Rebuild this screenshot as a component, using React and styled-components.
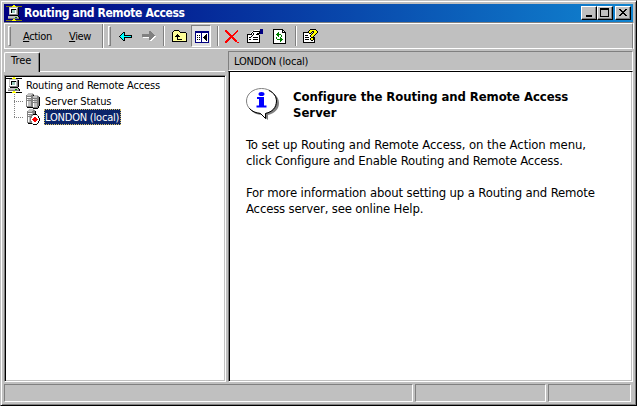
import React from 'react';
import styled, { createGlobalStyle } from 'styled-components';

const Global = createGlobalStyle`
  * { box-sizing: border-box; }
  html, body { margin: 0; padding: 0; overflow: hidden; background: #c0c0c0; }
  body { font-family: "DejaVu Sans Condensed", "DejaVu Sans", sans-serif; font-stretch: condensed; font-size: 11px; color: #000; }
`;

const PALETTE = {
  K: '#000000', W: '#ffffff', G: '#808080', L: '#c0c0c0', Y: '#ffff00', P: '#ffff99',
  C: '#00ffff', T: '#008080', N: '#000080', R: '#ff0000', E: '#008000',
  O: '#808000', D: '#555555', S: '#99ccbb',
};

const Svg = styled.svg`
  display: block;
  flex: none;
  shape-rendering: crispEdges;
`;

function PixelIcon({ rows }) {
  const width = Math.max(...rows.map((r) => r.length));
  const runs = [];
  rows.forEach((row, y) => {
    let x = 0;
    while (x < row.length) {
      const c = row[x];
      let end = x + 1;
      while (end < row.length && row[end] === c) end += 1;
      if (PALETTE[c]) runs.push(<rect key={`${x}-${y}`} x={x} y={y} width={end - x} height={1} fill={PALETTE[c]} />);
      x = end;
    }
  });
  return (
    <Svg width={width} height={rows.length} viewBox={`0 0 ${width} ${rows.length}`} aria-hidden="true">
      {runs}
    </Svg>
  );
}

const computer = (line) => [
  '.......YY.......',
  `${line.repeat(6)}YYYY${line.repeat(6)}`,
  '...LLLLLLLLL....',
  '...LWWWWWWWGK...',
  '...LWKKKKKLGK...',
  '...LWKSSSWLGK...',
  '...LWKSSSWLGK...',
  '...LWKSSSWLGK...',
  '...LWWWWWWLGK...',
  '...GGGGGGGGGK...',
  '....KKKKKKKK....',
  '..LLLLLLLLLLK...',
  '..LLLLLLLEELGK..',
  '..GGGGGGGGGGGK..',
  '.......YY.......',
  `${line.repeat(6)}YYYY${line.repeat(6)}`,
];

const servers = [
  '....LLLLL.......',
  '...LLLLLGG......',
  '..GLLLLGGKLLLL..',
  '..GGGGGGGLLLLGG.',
  '..GWWWWGGLLLLGGK',
  '..GGGGGGGGGGGGGK',
  '..GWLLLGGWLLLGGK',
  '..GGGGGGGGGGGGGK',
  '..GWLLLGGWLLLGGK',
  '..GWLLLGGGGGGGGK',
  '..GWLLLGGWLLLGGK',
  '..GWLLLGGWLLLGGK',
  '..GWLLLGGWLLLGGK',
  '..GGGGGGGWLLLGK.',
  '...KKKKKKGGGGGK.',
  '.........KKKKK..',
];

const stoppedServer = [
  '.....LLLLL......',
  '....LLLLLGG.....',
  '...GLLLLGGGK....',
  '...GGGGGGGGK....',
  '...GWWWWLGGK....',
  '...GGGGGGKKKK...',
  '...GWLLGGWWWWG..',
  '...GGGGGWWWWWWK.',
  '...GWLGGWWRRWWK.',
  '...GWLGWWRRRRWWK',
  '...GWLGWRRRRRRWK',
  '...GWLGWWRRRRWWK',
  '...GWLGGWWRRWWK.',
  '...GGGGGWWWWWWK.',
  '....KKKKGWWWWK..',
  '.........KKKK...',
];

const back = [
  '....KK.......',
  '...KCK.......',
  '..KCCK.......',
  '.KCCCKKKKKKKK',
  'KCCCCCCCCCCCK',
  '.KCCCKKKKKKKK',
  '..KCCK.......',
  '...KCK.......',
  '....KK.......',
];

const forward = [
  '.......GG.....',
  '.......GGG....',
  '.......GGGG...',
  'GGGGGGGGGGGG..',
  'GGGGGGGGGGGGG.',
  'GGGGGGGGGGGGWW',
  '.WWWWWWGGGGWW.',
  '.......GGGWW..',
  '.......GGWW...',
  '........WW....',
];

const folderUp = [
  '..KKKKK........',
  '.KPPPPPK.......',
  'KPPPPPPPKKKKKK.',
  'KPPPPPPPPPPPPPK',
  'KPPPPKPPPPPPPPK',
  'KPPPKKKPPPPPPPK',
  'KPPKKKKKPPPPPPK',
  'KPPPPKPPPPPPPPK',
  'KPPPPKPPPPPPPPK',
  'KPPPPKKKKKPPPPK',
  'KPPPPPPPPPPPPPK',
  'KKKKKKKKKKKKKKK',
];

const treeToggle = [
  'NNNNNNNNNNNNNN',
  'NNNNNNNNNNNNNN',
  'NWWWWWNWWWWWWN',
  'NWWWWWNWWWWKWN',
  'NWKWKWNWWWKKWN',
  'NWWWWWNWWKKKWN',
  'NWKWKWNWKKKKWN',
  'NWWWWWNWWKKKWN',
  'NWKWKWNWWWKKWN',
  'NWWWWWNWWWWKWN',
  'NWWWWWNWWWWWWN',
  'NNNNNNNNNNNNNN',
];

const remove = [
  'RR..........R.',
  'RRR........RR.',
  '.RRR......RR..',
  '..RRR....RR...',
  '...RRR..RR....',
  '....RRRRR.....',
  '.....RRR......',
  '....RRRRR.....',
  '...RRR.RRR....',
  '..RRR...RRR...',
  '.RRR.....RRR..',
  'RRR.......RR..',
  'RR..........RR',
];

const properties = [
  '.............NNN',
  '.......WWWWW.NNN',
  '.....WKKKKKKKNNN',
  '....WKWWWWWWKNNN',
  '...WKWKWWWKKKNNN',
  'KKKKKWKWWKKK....',
  'KWWWWKWWWWWWK...',
  'KWWWKWWWWWWWK...',
  'KWKKWWKKKKKWK...',
  'KWWWWWWWWWWWK...',
  'KWKKWWKKKKKWK...',
  'KWWWWWWWWWWWK...',
  'KWWWWWWWWWWWK...',
  'KKKKKKKKKKKKK...',
];

const refresh = [
  'KKKKKKKKKK...',
  'KWWWWWWWWKK..',
  'KWWWWWWWWKWK.',
  'KWWWWEWWWKKKK',
  'KWWWEEWWWWWWK',
  'KWWEEEEEWWWWK',
  'KWWWEEWWEWWWK',
  'KWWWWEWWEWWWK',
  'KWWEWWWEWWWWK',
  'KWWEWWWEEWWWK',
  'KWWWEEEEEEWWK',
  'KWWWWWWEEWWWK',
  'KWWWWWWEWWWWK',
  'KWWWWWWWWWWWK',
  'KKKKKKKKKKKKK',
];

const help = [
  '.......KKKKKK..',
  '......KYYYYYYK.',
  '.....KYYYKKYYYK',
  'KKKKKKYYK.KYYYK',
  'KWWWWWKK.KYYYK.',
  'KWWWWWWWKYYYK..',
  'KWKKKWWKYYYK...',
  'KWWWWWWKYYK....',
  'KWKKKKWWKKKK...',
  'KWWWWWWKYYKK...',
  'KWKKKKWKYYKK...',
  'KWWWWWWWKKWK...',
  'KWWWWWWWWWWK...',
  'KKKKKKKKKKKK...',
];

const minimizeGlyph = ['........', '........', '........', '........', '........', '........', '.KKKKKK.', '.KKKKKK.'];
const maximizeGlyph = ['KKKKKKKKK', 'KKKKKKKKK', 'K.......K', 'K.......K', 'K.......K', 'K.......K', 'K.......K', 'K.......K', 'KKKKKKKKK'];
const closeGlyph = ['KK....KK', '.KK..KK.', '..KKKK..', '...KK...', '..KKKK..', '.KK..KK.', 'KK....KK', '........'];

const Window = styled.main`
  width: 637px;
  height: 406px;
  display: flex;
  flex-direction: column;
  background: #c0c0c0;
  border: 1px solid #c0c0c0;
  border-right-color: #000;
  border-bottom-color: #000;
  box-shadow: inset 1px 1px #fff, inset -1px -1px #808080;
  padding: 3px 2px 2px 3px;
`;

const TitleBar = styled.header`
  height: 18px;
  flex: none;
  width: 629px;
  display: flex;
  align-items: center;
  padding: 0 2px;
  background: linear-gradient(90deg, #000080, #1084d0);
`;

const Title = styled.h1`
  margin: 0 auto 0 2px;
  font-size: 12px;
  line-height: 18px;
  font-weight: bold;
  color: #fff;
  letter-spacing: -0.37px;
  white-space: nowrap;
`;

const CaptionButton = styled.button`
  width: 16px;
  height: 14px;
  padding: 0 1px 1px 0;
  margin-left: ${(p) => (p.$gap ? 2 : 0)}px;
  display: flex;
  align-items: center;
  justify-content: center;
  background: #c0c0c0;
  border: 1px solid;
  border-color: #fff #000 #000 #fff;
  box-shadow: inset -1px -1px #808080;
`;

const Toolbar = styled.nav`
  height: 26px;
  width: 629px;
  flex: none;
  margin-top: 1px;
  display: flex;
  align-items: center;
  border: 1px solid #fff;
  border-right-color: #808080;
  box-shadow: 1px 0 #fff, 0 -1px #808080;
  padding-left: 3px;
`;

const Gripper = styled.span`
  width: 3px;
  height: 20px;
  margin-left: ${(p) => p.$left || 0}px;
  border: 1px solid;
  border-color: #fff #808080 #808080 #fff;
`;

const MenuItem = styled.span`
  width: ${(p) => p.$width}px;
  margin-left: ${(p) => p.$left}px;
  padding-top: 1px;
  letter-spacing: -0.35px;
  line-height: 16px;
  white-space: nowrap;
`;

const Separator = styled.span`
  width: 2px;
  height: ${(p) => (p.$full ? 24 : 20)}px;
  border-left: 1px solid #808080;
  border-right: 1px solid #fff;
  margin-left: ${(p) => p.$left}px;
`;

const Tool = styled.span`
  margin-left: ${(p) => p.$left}px;
`;

const PressedTool = styled.span`
  width: 20px;
  height: 22px;
  margin-left: 4px;
  padding: 5px 2px 0 3px;
  border: 1px solid;
  border-color: #808080 #fff #fff #808080;
  background: #e0e0e0;
`;

const Panes = styled.div`
  width: 629px;
  height: 334px;
  flex: none;
  display: flex;
`;

const TreePane = styled.section`
  width: 221px;
  display: flex;
  flex-direction: column;
`;

const TabStrip = styled.div`
  height: 23px;
  padding-top: 3px;
  display: flex;
`;

const Tab = styled.div`
  width: 36px;
  height: 20px;
  padding-left: 6px;
  line-height: 15px;
  border: 1px solid #fff;
  border-right: 1px solid #000;
  border-bottom: 0;
  border-radius: 2px 2px 0 0;
  box-shadow: inset -1px 0 #808080;
`;

const TabRule = styled.div`
  flex: 1;
  margin-top: 19px;
  height: 1px;
  background: #fff;
`;

const TreeBody = styled.div`
  flex: none;
  height: 307px;
  width: 222px;
  margin-top: 3px;
  background: #fff;
  border: 1px solid;
  border-color: #808080 #fff #fff #808080;
  box-shadow: inset 1px 1px #000, inset -1px -1px #c0c0c0;
  padding: 1px;
`;

const TreeRow = styled.div`
  height: 16px;
  display: flex;
  align-items: center;
  padding-left: ${(p) => (p.$child ? 8 : 0)}px;
`;

const Branch = styled.span`
  width: 10px;
  height: 16px;
  display: flex;
  align-items: center;
  background: repeating-linear-gradient(0deg, #808080 0 1px, transparent 1px 2px) 0 0 / 1px ${(p) => (p.$last ? 8 : 16)}px no-repeat;
  &::before {
    content: "";
    width: 10px;
    height: 1px;
    background: repeating-linear-gradient(90deg, #808080 0 1px, transparent 1px 2px);
  }
`;

const Label = styled.span`
  height: 16px;
  line-height: 17px;
  margin-left: 2px;
  padding: 0 2px;
  letter-spacing: ${(p) => p.$spacing || 0}px;
  white-space: nowrap;
`;

const ChildLabel = styled(Label)`
  margin-left: 3px;
`;

const SelectedLabel = styled(Label)`
  margin-left: 4px;
  padding: 0 2px 0 1px;
  color: #fff;
  background: #0a246a;
  outline: 1px dotted #d8c060;
  outline-offset: -1px;
`;

const DetailPane = styled.section`
  width: 406px;
  margin-left: 3px;
  display: flex;
  flex-direction: column;
`;

const DetailHeader = styled.div`
  height: 20px;
  margin-top: 2px;
  border: 1px solid;
  border-color: #808080 #fff #fff #808080;
  padding-left: 5px;
  line-height: 19px;
  letter-spacing: -0.2px;
`;

const DetailBody = styled.article`
  height: 311px;
  background: #fff;
  border: 1px solid;
  border-color: #000 #fff #fff #808080;
  box-shadow: inset 1px 0 #000, inset -1px -1px #c0c0c0;
  padding: 16px 0 0 17px;
  font-size: 13px;
  line-height: 16px;
`;

const Intro = styled.div`
  display: flex;
  height: 49px;
`;

const Heading = styled.h2`
  margin: 1px 0 0 14px;
  font-size: 13px;
  line-height: 16px;
  font-weight: bold;
  white-space: nowrap;
`;

const Paragraph = styled.p`
  margin: 0 0 16px;
`;

const Line = styled.span`
  display: block;
  white-space: nowrap;
  letter-spacing: ${(p) => p.$spacing || 0}px;
`;

const StatusBar = styled.footer`
  width: 629px;
  height: 18px;
  margin-top: 1px;
  display: flex;
  gap: 2px;
`;

const StatusCell = styled.div`
  width: ${(p) => p.$width}px;
  border: 1px solid;
  border-color: #808080 #fff #fff #808080;
`;

const Balloon = styled.svg`
  display: block;
  flex: none;
`;

function InfoBalloon() {
  return (
    <Balloon width="33" height="32" viewBox="0 0 33 32" aria-hidden="true">
      <path d="M17 3C27 3 33 8 33 15C33 21 29 25 22 27L22 32L16 27C7 27 3 21 3 15Z" fill="#808080" />
      <path d="M15.5 .5C24 .5 30.5 6 30.5 13S26 24 19.5 25.5V30.5L14.5 25.5C7 25 .5 20 .5 13S7 .5 15.5 .5Z" fill="#fff" stroke="#808080" />
      <path d="M23 2.5C28 5 30.5 8.5 30.5 13C30.5 20 26 24 19.5 25.5V30.5L14.5 25.5C10 25 6 23.5 3.5 20.5" fill="none" stroke="#000" />
      <ellipse cx="15.5" cy="6" rx="3" ry="2" fill="#00f" />
      <path d="M11 9H18V17.5H20.5V19.5H10.5V17.5H13V11H11Z" fill="#00f" />
    </Balloon>
  );
}

export default function App() {
  return (
    <>
      <Global />
      <Window>
        <TitleBar>
          <PixelIcon rows={computer('O')} />
          <Title>Routing and Remote Access</Title>
          <CaptionButton aria-label="Minimize"><PixelIcon rows={minimizeGlyph} /></CaptionButton>
          <CaptionButton aria-label="Maximize"><PixelIcon rows={maximizeGlyph} /></CaptionButton>
          <CaptionButton aria-label="Close" $gap><PixelIcon rows={closeGlyph} /></CaptionButton>
        </TitleBar>
        <Toolbar>
          <Gripper />
          <MenuItem $left={12} $width={31}><u>A</u>ction</MenuItem>
          <MenuItem $left={15} $width={22}><u>V</u>iew</MenuItem>
          <Separator $left={11} $full />
          <Gripper $left={4} />
          <Tool $left={8}><PixelIcon rows={back} /></Tool>
          <Tool $left={10}><PixelIcon rows={forward} /></Tool>
          <Separator $left={7} />
          <Tool $left={7}><PixelIcon rows={folderUp} /></Tool>
          <PressedTool><PixelIcon rows={treeToggle} /></PressedTool>
          <Separator $left={6} />
          <Tool $left={6}><PixelIcon rows={remove} /></Tool>
          <Tool $left={8}><PixelIcon rows={properties} /></Tool>
          <Tool $left={10}><PixelIcon rows={refresh} /></Tool>
          <Separator $left={9} />
          <Tool $left={6}><PixelIcon rows={help} /></Tool>
        </Toolbar>
        <Panes>
          <TreePane>
            <TabStrip>
              <Tab>Tree</Tab>
              <TabRule />
            </TabStrip>
            <TreeBody>
              <TreeRow>
                <PixelIcon rows={computer('K')} />
                <Label $spacing={-0.16}>Routing and Remote Access</Label>
              </TreeRow>
              <TreeRow $child>
                <Branch />
                <PixelIcon rows={servers} />
                <ChildLabel $spacing={-0.05}>Server Status</ChildLabel>
              </TreeRow>
              <TreeRow $child>
                <Branch $last />
                <PixelIcon rows={stoppedServer} />
                <SelectedLabel $spacing={-0.2}>LONDON (local)</SelectedLabel>
              </TreeRow>
            </TreeBody>
          </TreePane>
          <DetailPane>
            <DetailHeader>LONDON (local)</DetailHeader>
            <DetailBody>
              <Intro>
                <InfoBalloon />
                <Heading>
                  <Line $spacing={-0.08}>Configure the Routing and Remote Access</Line>
                  <Line>Server</Line>
                </Heading>
              </Intro>
              <Paragraph>
                <Line $spacing={-0.09}>To set up Routing and Remote Access, on the Action menu,</Line>
                <Line $spacing={-0.18}>click Configure and Enable Routing and Remote Access.</Line>
              </Paragraph>
              <Paragraph>
                <Line $spacing={-0.15}>For more information about setting up a Routing and Remote</Line>
                <Line $spacing={-0.16}>Access server, see online Help.</Line>
              </Paragraph>
            </DetailBody>
          </DetailPane>
        </Panes>
        <StatusBar>
          <StatusCell $width={409} />
          <StatusCell $width={131} />
          <StatusCell $width={83} />
        </StatusBar>
      </Window>
    </>
  );
}
